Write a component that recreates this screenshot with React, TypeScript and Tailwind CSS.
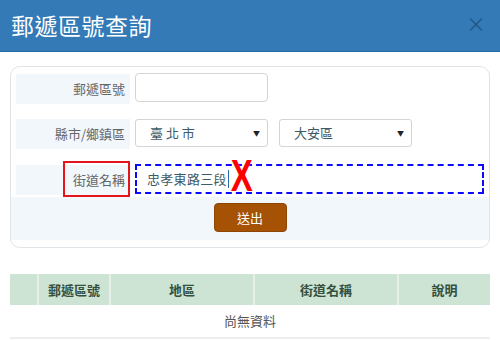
const font = { fontFamily: '"Noto Sans CJK TC", "Noto Sans", sans-serif' };

function Label({ children }: { children: React.ReactNode }) {
  return (
    <div className="w-[114px] h-[30px] bg-[#f2f7fc] flex items-center justify-end pr-[5px] text-[13px] text-[#666]">
      {children}
    </div>
  );
}

function Select({ value, className }: { value: string; className: string }) {
  return (
    <div
      className={`h-[28px] border border-[#d4d4d4] rounded-[3px] bg-white flex items-center justify-between pl-[14px] pr-[7px] text-[13px] text-[#3d5b66] ${className}`}
    >
      <span>{value}</span>
      <span className="text-[7px] text-[#222]">▼</span>
    </div>
  );
}

export default function App() {
  return (
    <div className="w-[500px] h-[340px] bg-white overflow-hidden" style={font}>
      <div className="h-[52px] bg-[#337ab7] border-b border-[#2e6da4] flex items-center justify-between pl-[11px] pr-[14px]">
        <h1 className="text-[23px] text-white leading-none tracking-[0.5px]">郵遞區號查詢</h1>
        <span className="text-[20px] text-[#1f4f7a] opacity-80 leading-none mb-[4px]">×</span>
      </div>

      <div className="px-[10px] pt-[14px]">
        <div className="border border-[#dfe4e8] rounded-[10px] bg-white overflow-hidden pt-[7px] pb-[7px]">
          <div className="flex flex-col gap-[15px] px-[5px]">
            <div className="flex items-start gap-[5px]">
              <Label>郵遞區號</Label>
              <div className="w-[133px] h-[29px] -mt-[1px] border border-[#d4d4d4] rounded-[4px] bg-white" />
            </div>
            <div className="flex items-start gap-[5px]">
              <Label>縣市/鄉鎮區</Label>
              <Select value="臺 北 市" className="w-[133px]" />
              <Select value="大安區" className="w-[133px] ml-[6px]" />
            </div>
            <div className="flex items-start gap-[5px] mt-[1px]">
              <div className="relative">
                <Label>街道名稱</Label>
                <div className="absolute left-[47px] top-[-4px] w-[67px] h-[36px] border-2 border-[#e4161b]" />
              </div>
              <div className="relative w-[349px] h-[30px] -mt-[1px] border-2 border-dashed border-[#0a0aff] bg-white flex items-center pl-[10px] text-[13px] text-[#3d5b66]">
                <span className="tracking-[0.3px]">忠孝東路三段</span>
                <span className="w-px h-[18px] bg-[#2a6aa8] ml-[1px]" />
                <span
                  className="absolute left-[90px] top-[-12px] text-[44px] font-bold leading-none text-[#ff0000] scale-x-75"
                  style={{ fontFamily: '"Liberation Sans", Arial, sans-serif' }}
                >
                  X
                </span>
              </div>
            </div>
          </div>
          <div className="mt-[2px] bg-[#f2f7fc] flex justify-center pt-[6px] pb-[8px]">
            <button className="w-[73px] h-[29px] rounded-[4px] bg-[#a65205] border border-[#8d4504] text-white text-[13px]">
              送出
            </button>
          </div>
        </div>

        <table className="w-[480px] mt-[26px] border-collapse text-[13px]">
          <thead>
            <tr className="bg-[#cde3d3] h-[31px] text-[#34503f] font-bold">
              <th className="w-[28px] border-r-2 border-[#e6f0e8]" />
              <th className="w-[72px] border-r-2 border-[#e6f0e8]">郵遞區號</th>
              <th className="w-[144px] border-r-2 border-[#e6f0e8]">地區</th>
              <th className="w-[144px] border-r-2 border-[#e6f0e8]">街道名稱</th>
              <th className="w-[92px]">說明</th>
            </tr>
          </thead>
          <tbody>
            <tr className="h-[33px] border-b-2 border-[#eeeeee]">
              <td colSpan={5} className="text-center text-[#555]">
                尚無資料
              </td>
            </tr>
          </tbody>
        </table>
      </div>
    </div>
  );
}
